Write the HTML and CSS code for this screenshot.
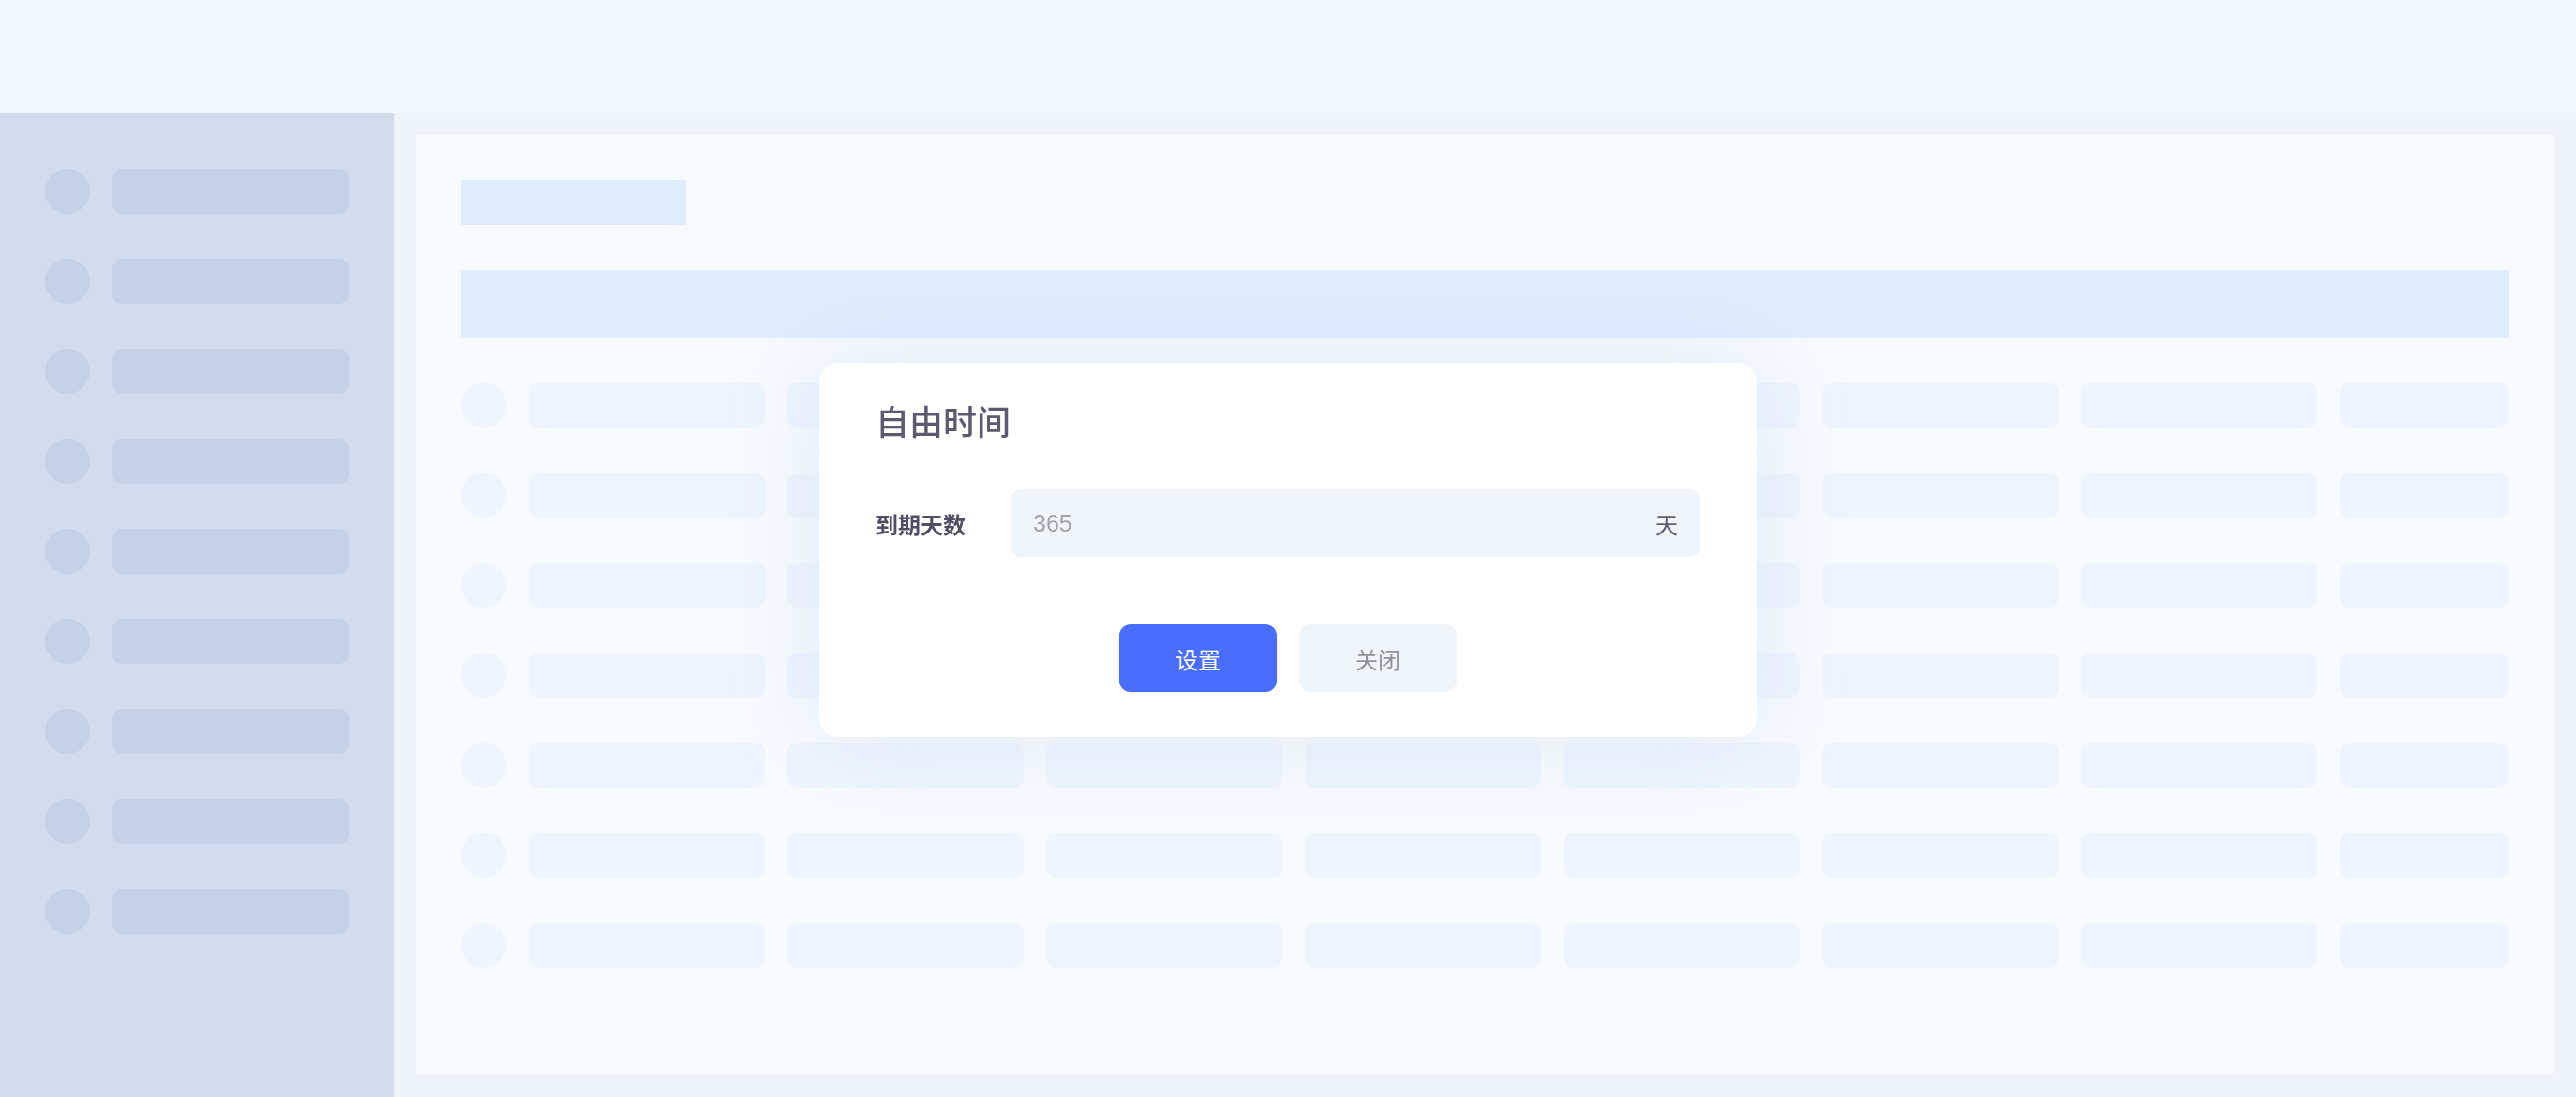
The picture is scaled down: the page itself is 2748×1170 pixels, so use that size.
FILE: index.html
```html
<!DOCTYPE html>
<html lang="zh-CN">
<head>
  <meta charset="UTF-8">
  <meta name="viewport" content="width=device-width, initial-scale=1.0">
  <title>自由时间</title>
  <link rel="stylesheet" href="styles.css">
</head>
<body>
  <!-- Barra superior -->
  <header class="topbar"></header>

  <div class="layout">
    <!-- Menu lateral (esqueleto) -->
    <aside class="sidebar">
      <div class="side-item"><span class="dot"></span><span class="line"></span></div>
      <div class="side-item"><span class="dot"></span><span class="line"></span></div>
      <div class="side-item"><span class="dot"></span><span class="line"></span></div>
      <div class="side-item"><span class="dot"></span><span class="line"></span></div>
      <div class="side-item"><span class="dot"></span><span class="line"></span></div>
      <div class="side-item"><span class="dot"></span><span class="line"></span></div>
      <div class="side-item"><span class="dot"></span><span class="line"></span></div>
      <div class="side-item"><span class="dot"></span><span class="line"></span></div>
      <div class="side-item"><span class="dot"></span><span class="line"></span></div>
    </aside>

    <!-- Conteúdo principal (esqueleto da tabela) -->
    <main class="main">
      <section class="card">
        <div class="card-title"></div>
        <div class="table-head"></div>
        <div class="table-body">
          <div class="row"><span class="dot"></span><span class="cell"></span><span class="cell"></span><span class="cell"></span><span class="cell"></span><span class="cell"></span><span class="cell"></span><span class="cell"></span><span class="cell"></span></div>
          <div class="row"><span class="dot"></span><span class="cell"></span><span class="cell"></span><span class="cell"></span><span class="cell"></span><span class="cell"></span><span class="cell"></span><span class="cell"></span><span class="cell"></span></div>
          <div class="row"><span class="dot"></span><span class="cell"></span><span class="cell"></span><span class="cell"></span><span class="cell"></span><span class="cell"></span><span class="cell"></span><span class="cell"></span><span class="cell"></span></div>
          <div class="row"><span class="dot"></span><span class="cell"></span><span class="cell"></span><span class="cell"></span><span class="cell"></span><span class="cell"></span><span class="cell"></span><span class="cell"></span><span class="cell"></span></div>
          <div class="row"><span class="dot"></span><span class="cell"></span><span class="cell"></span><span class="cell"></span><span class="cell"></span><span class="cell"></span><span class="cell"></span><span class="cell"></span><span class="cell"></span></div>
          <div class="row"><span class="dot"></span><span class="cell"></span><span class="cell"></span><span class="cell"></span><span class="cell"></span><span class="cell"></span><span class="cell"></span><span class="cell"></span><span class="cell"></span></div>
          <div class="row"><span class="dot"></span><span class="cell"></span><span class="cell"></span><span class="cell"></span><span class="cell"></span><span class="cell"></span><span class="cell"></span><span class="cell"></span><span class="cell"></span></div>
        </div>
      </section>
    </main>
  </div>

  <!-- Diálogo -->
  <div class="dialog">
    <h2 class="dialog-title">自由时间</h2>
    <form class="dialog-form">
      <div class="field">
        <label for="dias">到期天数</label>
        <div class="input-box">
          <input type="text" id="dias" placeholder="365">
          <span class="suffix">天</span>
        </div>
      </div>
      <div class="actions">
        <button type="submit" class="btn btn-primary">设置</button>
        <button type="button" class="btn btn-plain">关闭</button>
      </div>
    </form>
  </div>
</body>
</html>
```

FILE: styles.css
```css
/* Geral */
body {
  margin: 0;
  font-family: "Liberation Sans", "Noto Sans CJK SC", sans-serif;
  background: #eff4f8;
  color: #4f4e62;
  height: 1170px;
  overflow: hidden;
}
.topbar {
  height: 120px;
  background: #f2f7fe;
}
.layout {
  display: flex;
  height: 1050px;
}
/* Menu lateral */
.sidebar {
  width: 420px;
  background: #d2dcec;
  padding: 60px 48px 0;
  box-sizing: border-box;
  display: flex;
  flex-direction: column;
  gap: 48px;
}
.side-item {
  display: flex;
  gap: 24px;
}
.side-item .dot {
  width: 48px;
  height: 48px;
  border-radius: 50%;
  background: #c5d1e4;
}
.side-item .line {
  width: 252px;
  height: 48px;
  border-radius: 10px;
  background: #c5d1e4;
}
/* Área principal */
.main {
  flex: 1;
  padding: 24px;
}
.card {
  height: 100%;
  box-sizing: border-box;
  background: #f7faff;
  padding: 48px;
}
.card-title {
  width: 240px;
  height: 48px;
  background: #e0edfd;
  margin-bottom: 48px;
}
.table-head {
  height: 72px;
  background: #e0edfd;
  margin-bottom: 48px;
}
.table-body {
  display: flex;
  flex-direction: column;
  gap: 48px;
}
.row {
  display: grid;
  grid-template-columns: 48px repeat(7, 252px) 1fr;
  gap: 24px;
}
.row .dot {
  height: 48px;
  border-radius: 50%;
  background: #eef5fe;
}
.row .cell {
  height: 48px;
  border-radius: 10px;
  background: #eef5fe;
}
/* Diálogo */
.dialog {
  position: fixed;
  left: 874px;
  top: 387px;
  width: 1000px;
  box-sizing: border-box;
  padding: 40px 60px 48px;
  background: #fff;
  border-radius: 20px;
  box-shadow: 0 0 100px rgba(160, 180, 215, 0.22);
}
.dialog-title {
  margin: 0 0 45px;
  font-size: 36px;
  line-height: 50px;
  font-weight: 500;
  color: #5b5a6e;
}
.field {
  display: flex;
  align-items: center;
}
.field label {
  width: 144px;
  font-size: 24px;
  font-weight: 700;
  color: #4f4e62;
}
.input-box {
  flex: 1;
  display: flex;
  align-items: center;
  height: 72px;
  padding: 0 24px;
  background: #f0f5f9;
  border-radius: 12px;
}
.input-box input {
  flex: 1;
  border: none;
  outline: none;
  background: transparent;
  padding: 0;
  font-family: inherit;
  font-size: 25px;
  color: #4f4e62;
}
.input-box input::placeholder {
  color: #a0a3ab;
}
.suffix {
  font-size: 24px;
  color: #5c5c70;
}
.actions {
  display: flex;
  justify-content: center;
  gap: 24px;
  margin-top: 72px;
}
.btn {
  width: 168px;
  height: 72px;
  border: none;
  border-radius: 12px;
  font-family: inherit;
  font-size: 24px;
  cursor: pointer;
}
.btn-primary {
  background: #486dff;
  color: #fff;
}
.btn-plain {
  background: #f0f5f9;
  color: #8f9299;
}
```
